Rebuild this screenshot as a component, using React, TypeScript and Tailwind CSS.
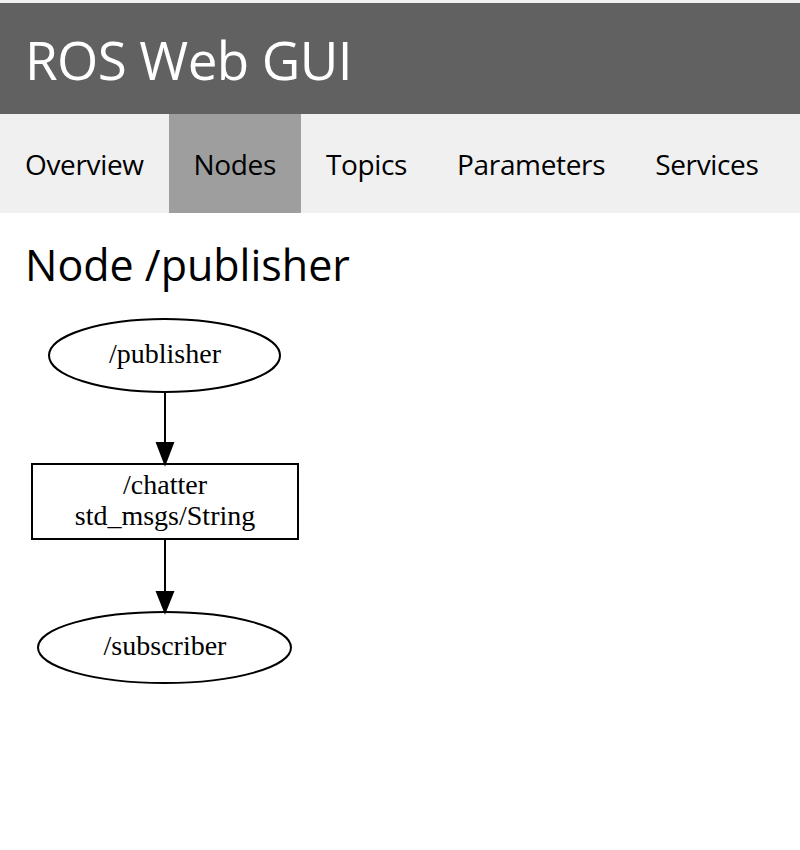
import React from "react";

const navItems = ["Overview", "Nodes", "Topics", "Parameters", "Services"];

export default function App() {
  const ox = 25;
  const oy = 300;
  const X = (x: number) => x - ox;
  const Y = (y: number) => y - oy;
  return (
    <div className="min-h-[850px] bg-white" style={{ fontFamily: '"Open Sans", "Noto Sans", sans-serif' }}>
      <div className="h-[3px] bg-[#f0f0f0]" />
      <header className="h-[111px] bg-[#616161] flex items-center px-[25px]">
        <h1 className="text-white text-[53px] leading-none tracking-[-0.6px] pt-[2px]">ROS Web GUI</h1>
      </header>
      <nav className="h-[99px] bg-[#f0f0f0] flex">
        {navItems.map((n) => (
          <div
            key={n}
            className={
              "flex items-center px-[25px] text-[28px] tracking-[-0.35px] text-black " +
              (n === "Nodes" ? "bg-[#9e9e9e]" : "")
            }
          >
            {n}
          </div>
        ))}
      </nav>
      <main className="px-[25px]">
        <h2 className="text-[43px] leading-none text-black pt-[30px] h-[87px]">Node /publisher</h2>
        <svg width={330} height={400} viewBox="0 0 330 400" className="block" style={{ fontFamily: '"Liberation Serif", serif' }}>
          <ellipse cx={X(164.5)} cy={Y(355.5)} rx={115.5} ry={36.5} fill="none" stroke="black" strokeWidth={2} />
          <text x={X(165)} y={Y(363)} textAnchor="middle" fontSize={28}>/publisher</text>
          <line x1={X(165)} y1={Y(392)} x2={X(165)} y2={Y(444)} stroke="black" strokeWidth={2} />
          <polygon points={`${X(157)},${Y(443)} ${X(173)},${Y(443)} ${X(165)},${Y(464)}`} fill="black" stroke="black" strokeWidth={2} />
          <rect x={X(32)} y={Y(464)} width={266} height={75} fill="none" stroke="black" strokeWidth={2} />
          <text x={X(165)} y={Y(494)} textAnchor="middle" fontSize={28}>/chatter</text>
          <text x={X(165)} y={Y(525)} textAnchor="middle" fontSize={28}>std_msgs/String</text>
          <line x1={X(165)} y1={Y(540)} x2={X(165)} y2={Y(593)} stroke="black" strokeWidth={2} />
          <polygon points={`${X(157)},${Y(592)} ${X(173)},${Y(592)} ${X(165)},${Y(612)}`} fill="black" stroke="black" strokeWidth={2} />
          <ellipse cx={X(164.5)} cy={Y(647.5)} rx={126.5} ry={35.5} fill="none" stroke="black" strokeWidth={2} />
          <text x={X(165)} y={Y(655)} textAnchor="middle" fontSize={28}>/subscriber</text>
        </svg>
      </main>
    </div>
  );
}
